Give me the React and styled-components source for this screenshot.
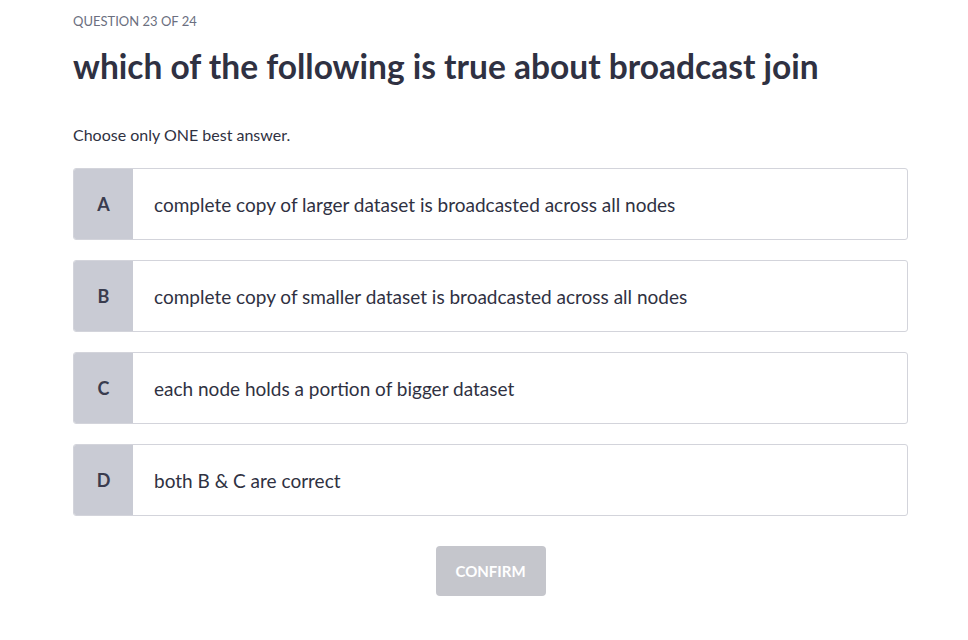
import React from 'react'
import styled, { createGlobalStyle } from 'styled-components'

const GlobalStyle = createGlobalStyle`
	html, body {
		margin: 0;
		padding: 0;
		background: #ffffff;
	}
	body {
		font-family: Lato, "Noto Sans", sans-serif;
		color: #2f3142;
	}
`

const StyledQuiz = styled.div`
	padding: 12px 60px 0 73px;
	width: 968px;
	box-sizing: border-box;
`

const StyledCounter = styled.div`
	font-size: 13px;
	line-height: 18px;
	color: #6b6f80;
	text-transform: uppercase;
`

const StyledTitle = styled.h1`
	margin: 16px 0 0;
	font-size: 33.5px;
	line-height: 40px;
	font-weight: 700;
	color: #2f3142;
`

const StyledHint = styled.p`
	margin: 39px 0 0;
	font-size: 16px;
	line-height: 20px;
	color: #2f3142;
`

const StyledOptions = styled.div`
	display: flex;
	flex-flow: column;
	gap: 20px;
	margin-top: 23px;
	width: 835px;
`

const StyledOption = styled.div`
	display: flex;
	height: 72px;
	box-sizing: border-box;
	border: 1px solid #d3d4db;
	border-radius: 3px;
	overflow: hidden;
	background: #ffffff;
	cursor: pointer;

	label {
		flex: 0 0 59px;
		display: flex;
		align-items: center;
		justify-content: center;
		background: #c9cbd4;
		font-size: 18px;
		font-weight: 700;
		color: #3a3c4e;
	}
	span {
		display: flex;
		align-items: center;
		padding-left: 21px;
		font-size: 19px;
		color: #2f3142;
	}
`

const StyledFooter = styled.div`
	display: flex;
	justify-content: center;
	margin-top: 30px;
	width: 835px;
`

const StyledButton = styled.button`
	width: 110px;
	height: 50px;
	border: none;
	border-radius: 4px;
	background: #c5c6cc;
	color: #ffffff;
	font-family: inherit;
	font-size: 15px;
	font-weight: 700;
	text-transform: uppercase;
	cursor: not-allowed;
`

const options = [
	{ key: 'A', text: 'complete copy of larger dataset is broadcasted across all nodes' },
	{ key: 'B', text: 'complete copy of smaller dataset is broadcasted across all nodes' },
	{ key: 'C', text: 'each node holds a portion of bigger dataset' },
	{ key: 'D', text: 'both B & C are correct' },
]

export default function App() {
	return <>
		<GlobalStyle/>
		<StyledQuiz>
			<StyledCounter>Question 23 of 24</StyledCounter>
			<StyledTitle>which of the following is true about broadcast join</StyledTitle>
			<StyledHint>Choose only ONE best answer.</StyledHint>
			<StyledOptions>
				{ options.map(o => <StyledOption key={ o.key }>
					<label>{ o.key }</label>
					<span>{ o.text }</span>
				</StyledOption>) }
			</StyledOptions>
			<StyledFooter>
				<StyledButton disabled>Confirm</StyledButton>
			</StyledFooter>
		</StyledQuiz>
	</>
}
